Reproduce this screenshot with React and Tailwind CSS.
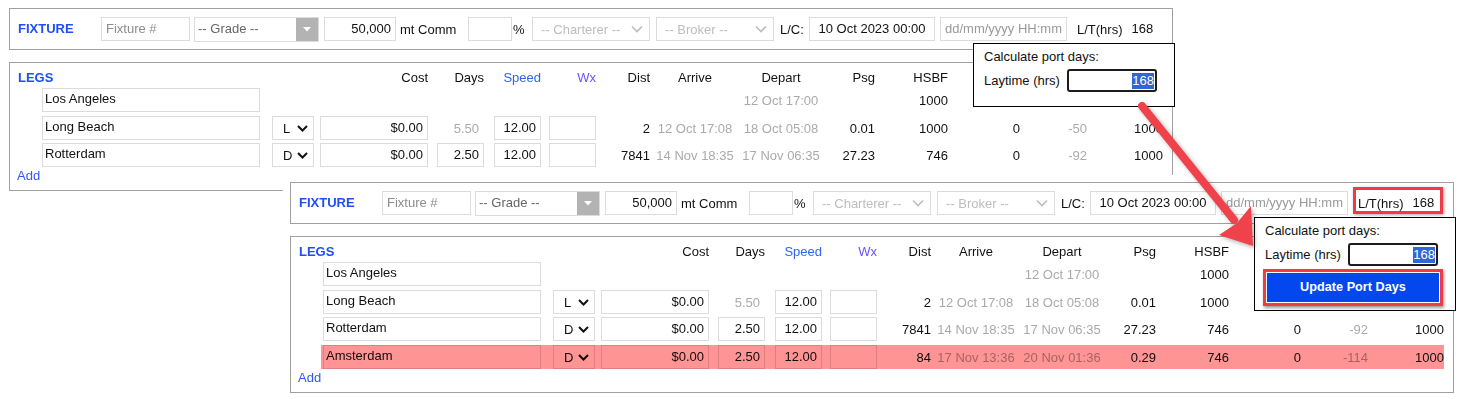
import React from "react";

function Chev({ className = "" }) {
  return (
    <svg width="11" height="7" viewBox="0 0 11 7" className={className}>
      <path d="M1 1L5.5 5.5L10 1" fill="none" stroke="currentColor" strokeWidth="2" />
    </svg>
  );
}

function ThinChev() {
  return (
    <svg width="12" height="8" viewBox="0 0 12 8" className="text-[#bdbdbd]">
      <path d="M1 1.5L6 6.5L11 1.5" fill="none" stroke="currentColor" strokeWidth="1.6" />
    </svg>
  );
}

function Box({ className = "", children }) {
  return (
    <div
      className={`flex h-[24px] items-center overflow-hidden whitespace-nowrap border border-[#dcdcdc] bg-white ${className}`}
    >
      {children}
    </div>
  );
}

const ROWS = [
  { port: "Los Angeles", depart: "12 Oct 17:00", hsbf: "1000" },
  {
    port: "Long Beach",
    type: "L",
    cost: "$0.00",
    days: "5.50",
    daysInput: false,
    speed: "12.00",
    wx: true,
    dist: "2",
    arrive: "12 Oct 17:08",
    depart: "18 Oct 05:08",
    psg: "0.01",
    hsbf: "1000",
    c9: "0",
    c10: "-50",
    c11: "1000",
  },
  {
    port: "Rotterdam",
    type: "D",
    cost: "$0.00",
    days: "2.50",
    daysInput: true,
    speed: "12.00",
    wx: true,
    dist: "7841",
    arrive: "14 Nov 18:35",
    depart: "17 Nov 06:35",
    psg: "27.23",
    hsbf: "746",
    c9: "0",
    c10: "-92",
    c11: "1000",
  },
];

const AMS = {
  port: "Amsterdam",
  type: "D",
  cost: "$0.00",
  days: "2.50",
  daysInput: true,
  speed: "12.00",
  wx: true,
  dist: "84",
  arrive: "17 Nov 13:36",
  depart: "20 Nov 01:36",
  psg: "0.29",
  hsbf: "746",
  c9: "0",
  c10: "-114",
  c11: "1000",
  hl: true,
};

const MT = ["mt-[3px]", "mt-[4px]", "mt-[3px]", "mt-[4px]"];

function LegRow({ r, mt }) {
  return (
    <div className={`relative ml-[30px] flex h-[24px] w-[1123px] items-center pl-[2px] ${mt}`}>
      <Box className="w-[218px] pb-[3px] pl-[2px]">{r.port}</Box>
      <div className="ml-[12px] w-[42px]">
        {r.type && (
          <Box className="justify-between pl-[10px] pr-[5px]">
            <span>{r.type}</span>
            <Chev />
          </Box>
        )}
      </div>
      <div className="ml-[6px] w-[108px]">
        {r.cost && <Box className="justify-end pb-[1px] pr-[4px]">{r.cost}</Box>}
      </div>
      <div className="ml-[9px] w-[47px]">
        {r.days &&
          (r.daysInput ? (
            <Box className="justify-end pb-[1px] pr-[4px]">{r.days}</Box>
          ) : (
            <div className="pr-[5px] text-right text-[#aaaaaa]">{r.days}</div>
          ))}
      </div>
      <div className="ml-[10px] w-[47px]">
        {r.speed && <Box className="justify-end pb-[1px] pr-[4px]">{r.speed}</Box>}
      </div>
      <div className="ml-[8px] w-[47px]">{r.wx && <Box />}</div>
      <div className="w-[54px] text-right">{r.dist}</div>
      <div className="ml-[3px] w-[84px] whitespace-nowrap text-center text-[#aaaaaa]">{r.arrive}</div>
      <div className="ml-[2px] w-[84px] whitespace-nowrap text-center text-[#aaaaaa]">{r.depart}</div>
      <div className="w-[52px] text-right">{r.psg}</div>
      <div className="w-[73px] text-right">{r.hsbf}</div>
      <div className="w-[72px] text-right">{r.c9}</div>
      <div className="w-[67px] text-right text-[#aaaaaa]">{r.c10}</div>
      <div className="w-[76px] text-right">{r.c11}</div>
      {r.hl && (
        <div className="pointer-events-none absolute inset-0 bg-[#ff9494] mix-blend-multiply" />
      )}
    </div>
  );
}

function Sel({ className = "", label }) {
  return (
    <Box className={`w-[118px] justify-between pl-[8px] pr-[6px] text-[#bdbdbd] ${className}`}>
      <span>{label}</span>
      <ThinChev />
    </Box>
  );
}

function Popup({ withButton }) {
  return (
    <div
      className={`absolute left-[964px] top-[35px] z-10 w-[202px] border border-black bg-white pt-[5px] ${
        withButton ? "pb-[4px]" : "pb-[14px]"
      }`}
    >
      <div className="pl-[10px] leading-[16px]">Calculate port days:</div>
      <div className="mt-[4px] flex h-[23px] items-center pl-[10px]">
        <span className="w-[83px] whitespace-nowrap">Laytime (hrs)</span>
        <div className="flex h-[23px] w-[90px] items-center justify-end rounded-[3px] border-2 border-[#1c1c1c] pr-[1px]">
          <span className="bg-[#3166d5] leading-[16px] text-white">168</span>
        </div>
      </div>
      {withButton && (
        <div className="ml-[8px] mt-[3px] w-[180px] border-[3px] border-[#ee3c47] bg-white p-[1px] shadow-[1px_2px_3px_rgba(0,0,0,0.4)]">
          <div className="flex h-[29px] items-center justify-center bg-[#0447ef] text-[12.7px] font-bold text-white">
            Update Port Days
          </div>
        </div>
      )}
    </div>
  );
}

function Panel({ rows, red, withButton }) {
  return (
    <div className="relative w-[1164px]">
      <div className="flex h-[42px] items-center border border-[#a0a0a0] bg-white">
        <span className="ml-[8px] w-[83px] pb-[1px] font-bold text-[#1f4ff2]">FIXTURE</span>
        <Box className="w-[89px] pb-[1px] pl-[4px] text-[#8c8c8c]">Fixture #</Box>
        <div className="ml-[4px] flex h-[25px] w-[125px] items-center border border-[#dcdcdc] bg-white">
          <span className="flex-1 pb-[2px] pl-[3px] text-[#666666]">-- Grade --</span>
          <div className="flex h-full w-[22px] items-center justify-center bg-[#b3b3b3]">
            <svg width="8" height="5" viewBox="0 0 8 5">
              <path d="M0 0H8L4 4.5Z" fill="#ffffff" />
            </svg>
          </div>
        </div>
        <Box className="ml-[5px] w-[72px] justify-end pb-[1px] pr-[4px]">50,000</Box>
        <span className="ml-[4px] w-[68px]">mt Comm</span>
        <Box className="w-[44px]" />
        <span className="ml-[1px] w-[19px]">%</span>
        <Sel label="-- Charterer --" />
        <Sel className="ml-[6px]" label="-- Broker --" />
        <span className="ml-[6px] w-[29px]">L/C:</span>
        <Box className="w-[126px] justify-center pb-[1px]">10 Oct 2023 00:00</Box>
        <Box className="ml-[5px] w-[127px] pb-[1px] pl-[4px] text-[#9a9a9a]">dd/mm/yyyy HH:mm</Box>
        <div className="relative ml-[10px] flex h-[24px] items-center">
          <span>L/T(hrs)</span>
          <span className="ml-[9px] pb-[2px]">168</span>
          {red && (
            <div className="pointer-events-none absolute bottom-[1px] left-[-5px] right-[-9px] top-[-4px] border-[3px] border-[#ee3c47] shadow-[1px_1px_3px_rgba(0,0,0,0.35)]" />
          )}
        </div>
      </div>

      <div className="mt-[12px] border border-[#a0a0a0] bg-white pb-[7px] pt-[7px]">
        <div className="flex h-[15px] items-center whitespace-nowrap leading-[15px]">
          <span className="ml-[8px] w-[302px] font-bold text-[#1f4ff2]">LEGS</span>
          <span className="w-[108px] text-right">Cost</span>
          <span className="ml-[9px] w-[47px] text-right">Days</span>
          <span className="ml-[10px] w-[47px] text-right text-[#2f63f2]">Speed</span>
          <span className="ml-[8px] w-[47px] text-right text-[#6a52ff]">Wx</span>
          <span className="w-[54px] text-right">Dist</span>
          <span className="ml-[3px] w-[84px] text-center">Arrive</span>
          <span className="ml-[2px] w-[84px] text-center">Depart</span>
          <span className="w-[52px] text-right">Psg</span>
          <span className="w-[73px] text-right">HSBF</span>
        </div>
        {rows.map((r, i) => (
          <LegRow key={r.port} r={r} mt={MT[i]} />
        ))}
        <div className="ml-[7px] mt-[1px] leading-[15px] text-[#3355ff]">Add</div>
      </div>

      <Popup withButton={withButton} />
    </div>
  );
}

function Arrow() {
  return (
    <svg
      width="1459"
      height="399"
      viewBox="0 0 1459 399"
      className="pointer-events-none absolute left-0 top-0 z-20 drop-shadow-[2px_2px_2px_rgba(0,0,0,0.3)]"
    >
      <line x1="1142" y1="106" x2="1234" y2="220" stroke="#f0424b" strokeWidth="8" strokeLinecap="round" />
      <polygon points="1253,246 1219,235 1237,223 1251,206" fill="#f0424b" />
    </svg>
  );
}

export default function App() {
  return (
    <div className="relative h-[399px] w-[1459px] overflow-hidden bg-white pl-[9px] pt-[8px] font-['Liberation_Sans',Arial,sans-serif] text-[13px] leading-[15px] text-[#111111]">
      <Panel rows={ROWS} />
      <div className="absolute left-[283px] top-[175px] bg-white p-[7px]">
        <Panel rows={[...ROWS, AMS]} red withButton />
      </div>
      <Arrow />
    </div>
  );
}
